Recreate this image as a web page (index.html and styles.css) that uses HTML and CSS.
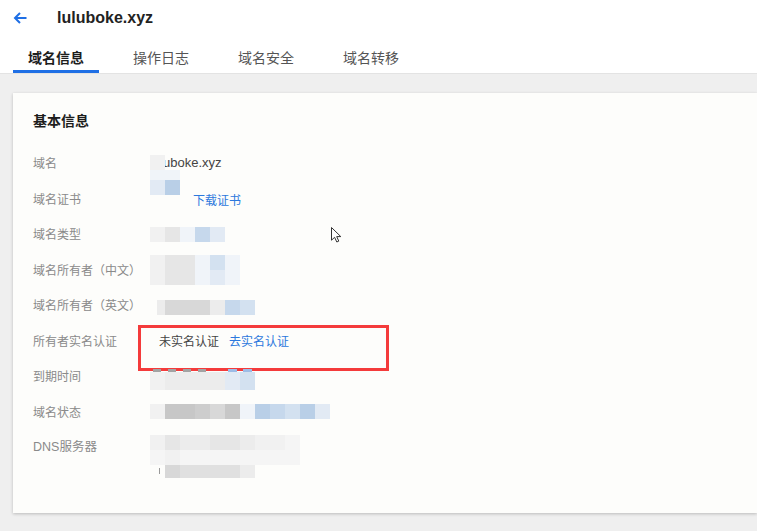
FILE: index.html
```html
<!DOCTYPE html>
<html lang="zh-CN">
<head>
<meta charset="utf-8">
<title>luluboke.xyz</title>
<link rel="stylesheet" href="styles.css">
</head>
<body>
<header class="header">
  <div class="title-row">
    <svg class="back" width="14" height="12" viewBox="0 0 14 12"><path d="M13.5 6H2M7 1L2 6l5 5" fill="none" stroke="#1f6fe5" stroke-width="2"/></svg>
    <h1 class="title">luluboke.xyz</h1>
  </div>
  <nav class="tabs">
    <span class="tab active">域名信息</span>
    <span class="tab">操作日志</span>
    <span class="tab">域名安全</span>
    <span class="tab">域名转移</span>
  </nav>
</header>

<main class="card">
  <h2 class="card-title">基本信息</h2>
  <div class="rows">
    <div class="row">
      <div class="label">域名</div>
      <div class="value">
        <span class="latin text">luluboke.xyz</span>
        <div class="overlay-mosaic">
          <div class="mcol"><i class="m g1"></i><i class="m s10 b0"></i></div>
          <div class="mcol"><i class="m w"></i><i class="m s10 b0"></i></div>
        </div>
      </div>
    </div>
    <div class="row">
      <div class="label">域名证书</div>
      <div class="value">
        <div class="mrow top"><i class="m b1"></i><i class="m b4"></i></div>
        <span class="link cert">下载证书</span>
      </div>
    </div>
    <div class="row">
      <div class="label">域名类型</div>
      <div class="value">
        <div class="mrow"><i class="m g1"></i><i class="m g3"></i><i class="m b0"></i><i class="m b3"></i><i class="m b1"></i></div>
      </div>
    </div>
    <div class="row">
      <div class="label">域名所有者（中文）</div>
      <div class="value">
        <div class="mgrid">
          <div class="mrow"><i class="m g1"></i><i class="m g3"></i><i class="m g3"></i><i class="m b0"></i><i class="m b2"></i><i class="m b0"></i></div>
          <div class="mrow"><i class="m g1"></i><i class="m g3"></i><i class="m g3"></i><i class="m b0"></i><i class="m b1"></i><i class="m b0"></i></div>
        </div>
      </div>
    </div>
    <div class="row">
      <div class="label">域名所有者（英文）</div>
      <div class="value">
        <div class="mrow shift5"><i class="m half"></i><i class="m g5"></i><i class="m g5"></i><i class="m g5"></i><i class="m g2"></i><i class="m b3"></i><i class="m b2"></i></div>
      </div>
    </div>
    <div class="row row-mark">
      <div class="label">所有者实名认证</div>
      <div class="value gap10">
        <span class="text">未实名认证</span>
        <span class="link">去实名认证</span>
      </div>
      <div class="mark"></div>
    </div>
    <div class="row">
      <div class="label">到期时间</div>
      <div class="value">
        <div class="mgrid shift10">
          <div class="mrow frag"><i class="f d"></i><i class="f d"></i><i class="f d"></i><i class="f d"></i><i class="f w"></i><i class="f bl"></i><i class="f bl"></i></div>
          <div class="mrow"><i class="m t18 g1"></i><i class="m t18 g2"></i><i class="m t18 g2"></i><i class="m t18 g2"></i><i class="m t18 g2"></i><i class="m t18 b1"></i><i class="m t18 b2"></i></div>
        </div>
      </div>
    </div>
    <div class="row">
      <div class="label">域名状态</div>
      <div class="value">
        <div class="mrow"><i class="m g1"></i><i class="m g7"></i><i class="m g7"></i><i class="m g6"></i><i class="m g5"></i><i class="m g7"></i><i class="m b0"></i><i class="m b4"></i><i class="m b3"></i><i class="m b2"></i><i class="m b4"></i><i class="m b1"></i></div>
      </div>
    </div>
    <div class="row row-dns">
      <div class="label latin-label">DNS服务器</div>
      <div class="value top-aligned">
        <div class="mgrid">
          <div class="mrow"><i class="m g1"></i><i class="m g3"></i><i class="m g2"></i><i class="m g2"></i><i class="m g3"></i><i class="m g3"></i><i class="m g2"></i><i class="m g1"></i><i class="m g1"></i><i class="m g0"></i></div>
          <div class="mrow"><i class="m g0"></i><i class="m g1"></i><i class="m g0"></i><i class="m g0"></i><i class="m g0"></i><i class="m g0"></i><i class="m g0"></i><i class="m g0"></i><i class="m g0"></i><i class="m g0"></i></div>
          <div class="mrow"><i class="m t13 tick"></i><i class="m t13 g5"></i><i class="m t13 g4"></i><i class="m t13 g4"></i><i class="m t13 g4"></i><i class="m t13 g4"></i><i class="m t13 g2"></i></div>
        </div>
      </div>
    </div>
  </div>
</main>

<svg class="cursor" width="11" height="16" viewBox="0 0 11 16"><path d="M0.5 0.5V13.2L3.6 10.3L5.8 15L7.8 14.1L5.7 9.6H9.8Z" fill="#fff" stroke="#333" stroke-width="1" stroke-linejoin="round"/></svg>
</body>
</html>
```

FILE: styles.css
```css
* { box-sizing: border-box; }
html, body { margin: 0; padding: 0; }
body {
  background: #efefef;
  font-family: "Liberation Sans", "Noto Sans CJK SC", sans-serif;
  color: #333;
  width: 757px;
  height: 531px;
  overflow: hidden;
  position: relative;
}

.header {
  background: #fff;
  border-bottom: 1px solid #e3e3e3;
  padding-left: 13px;
}
.title-row {
  height: 35px;
  display: flex;
  align-items: center;
}
.back { display: block; margin-right: 30px; }
.title {
  margin: 0;
  font-size: 16px;
  font-weight: bold;
  color: #222;
  line-height: 20px;
}
.tabs { display: flex; height: 38px; }
.tab {
  font-family: "Noto Sans CJK SC", sans-serif;
  font-size: 14px;
  line-height: 20px;
  padding: 12px 15px 3px;
  margin-right: 19px;
  color: #555;
  border-bottom: 3px solid transparent;
}
.tab.active {
  color: #1d1d1d;
  font-weight: bold;
  border-bottom-color: #1f6fe5;
}

.card {
  margin: 19px 0 0 13px;
  background: #fdfdfb;
  box-shadow: 0 1px 3px rgba(0,0,0,0.22);
  padding: 17px 0 35px 20px;
}
.card-title {
  margin: 0 0 15.25px;
  font-family: "Noto Sans CJK SC", sans-serif;
  font-size: 14px;
  line-height: 20px;
  font-weight: bold;
  color: #1d1d1d;
}
.row {
  display: flex;
  align-items: center;
  height: 35.5px;
}
.row-mark { position: relative; }
.row-dns { height: 49px; align-items: flex-start; }
.row-dns .label { margin-top: 10px; }
.label {
  width: 117px;
  flex: none;
  font-family: "Noto Sans CJK SC", sans-serif;
  font-size: 12px;
  line-height: 16px;
  color: #8a8a8a;
}
.latin-label { font-family: "Liberation Sans", "Noto Sans CJK SC", sans-serif; font-size: 12.5px; }
.value {
  position: relative;
  display: flex;
  align-items: center;
  align-self: stretch;
}
.value.top-aligned { align-items: flex-start; padding-top: 5.75px; }
.gap10 { gap: 10px; padding-left: 9px; }
.text {
  font-family: "Noto Sans CJK SC", sans-serif;
  font-size: 12px;
  line-height: 16px;
  color: #444;
}
.latin.text { font-family: "Liberation Sans", sans-serif; font-size: 13px; color: #444; }
.link {
  font-family: "Noto Sans CJK SC", sans-serif;
  font-size: 12px;
  line-height: 16px;
  color: #2c78dd;
}
.cert { margin-left: 13px; margin-top: 2px; }

/* pixelated mosaic that covers private values */
.overlay-mosaic {
  position: absolute;
  left: 0;
  top: 9.75px;
  display: flex;
}
.mcol { display: flex; flex-direction: column; }
.mgrid { display: flex; flex-direction: column; }
.mrow { display: flex; }
.mrow.top { align-self: flex-start; margin-top: -0.75px; }
.shift5 { margin-top: 5px; }
.shift10 { margin-top: 6px; }
.m { display: block; width: 15px; height: 15px; }
.m.s10 { height: 11px; }
.m.t18 { height: 18px; }
.m.t13 { height: 13px; }
.m.half { width: 8px; margin-left: 7px; background: #ececec; }
.m.w { background: transparent; }
.m.tick { background: linear-gradient(90deg, transparent 9px, #999 9px, #999 10px, transparent 10px); background-size: 100% 6px; background-repeat: no-repeat; background-position: 0 3px; }
.g0 { background: #f5f5f5; }
.g1 { background: #f1f1f1; }
.g2 { background: #ececec; }
.g3 { background: #e6e6e6; }
.g4 { background: #e0e0e0; }
.g5 { background: #d8d8d8; }
.g6 { background: #cdcdcd; }
.g7 { background: #c7c7c7; }
.b0 { background: #f0f4f9; }
.b1 { background: #e2eaf4; }
.b2 { background: #d3e1f0; }
.b3 { background: #c6d8ec; }
.b4 { background: #b9cfe7; }

.frag { height: 3px; margin-top: 1px; }
.f { display: block; width: 15px; height: 3px; }
.f.d { background: linear-gradient(90deg, transparent 3px, #a3a3a3 3px, #a3a3a3 11px, transparent 11px); }
.f.w { background: transparent; }
.f.bl { background: linear-gradient(90deg, transparent 3px, #9dbce6 3px, #9dbce6 12px, transparent 12px); }

/* red annotation frame */
.mark {
  position: absolute;
  left: 105px;
  top: 2.25px;
  width: 251px;
  height: 46px;
  border: 3px solid #f43b3b;
  pointer-events: none;
}

.cursor {
  position: absolute;
  left: 331px;
  top: 227px;
}
```
